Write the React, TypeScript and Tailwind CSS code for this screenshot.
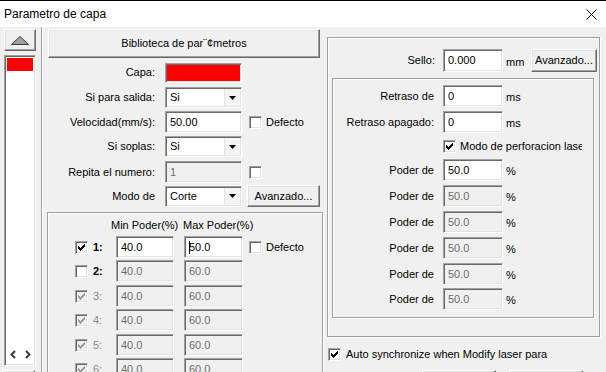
import type { ReactNode } from "react";

const sunken =
    "border border-t-[#a0a0a0] border-l-[#a0a0a0] border-r-white border-b-white shadow-[inset_1px_1px_0_#696969,inset_-1px_-1px_0_#e3e3e3]";
const raised =
    "border border-t-white border-l-white border-r-[#696969] border-b-[#696969] shadow-[inset_-1px_-1px_0_#a0a0a0,inset_1px_1px_0_#e3e3e3] bg-[#f0f0f0]";
const etched = "border border-[#a0a0a0] shadow-[1px_1px_0_#fff,inset_1px_1px_0_#fff]";

function Field({ value, className = "", disabled = false, caret = false }: { value: string; className?: string; disabled?: boolean; caret?: boolean }) {
    return (
        <div
            className={`${sunken} ${disabled ? "bg-[#f0f0f0] text-[#6d6d6d]" : "bg-white text-black"} h-[22px] shrink-0 flex items-center pl-[4px] ${className}`}
        >
            {caret && <span className="w-px h-[13px] bg-black -mr-px" />}
            {value}
        </div>
    );
}

function Check({ checked = false, disabled = false }: { checked?: boolean; disabled?: boolean }) {
    return (
        <div className={`${sunken} w-[13px] h-[13px] shrink-0 flex items-center justify-center ${disabled ? "bg-[#f0f0f0]" : "bg-white"}`}>
            {checked && (
                <svg width="7" height="7" viewBox="0 0 7 7" shapeRendering="crispEdges">
                    <path
                        d="M6 0h1v1h-1z M5 1h2v1h-2z M0 2h1v1h-1z M4 2h3v1h-3z M0 3h2v1h-2z M3 3h3v1h-3z M0 4h5v1h-5z M1 5h3v1h-3z M2 6h1v1h-1z"
                        fill={disabled ? "#a0a0a0" : "#000"}
                    />
                </svg>
            )}
        </div>
    );
}

function Select({ value }: { value: string }) {
    return (
        <div className={`${sunken} bg-white w-[77px] h-[21px] shrink-0 flex items-stretch`}>
            <span className="flex-1 flex items-center pl-[4px]">{value}</span>
            <div className="w-[16px] border-l border-[#e3e3e3] bg-[#f4f4f4] flex items-center justify-center mr-px my-px">
                <svg width="7" height="4" viewBox="0 0 7 4">
                    <path d="M0 0h7L3.5 4z" fill="#000" />
                </svg>
            </div>
        </div>
    );
}

function Button({ children, className = "" }: { children?: ReactNode; className?: string }) {
    return <div className={`${raised} flex items-center justify-center shrink-0 ${className}`}>{children}</div>;
}

function Row({ label, className = "", children }: { label: string; className?: string; children: ReactNode }) {
    return (
        <div className={`flex items-center shrink-0 ${className}`}>
            <span className="w-[107px] shrink-0 text-right">{label}</span>
            <div className="ml-[10px] flex items-center">{children}</div>
        </div>
    );
}

function RightRow({ label, value, unit, disabled = false, className = "" }: { label: string; value: string; unit: string; disabled?: boolean; className?: string }) {
    return (
        <div className={`flex items-center h-[22px] shrink-0 ${className}`}>
            <span className="w-[101px] shrink-0 text-right">{label}</span>
            <Field value={value} disabled={disabled} className="w-[60px] ml-[9px]" />
            <span className="ml-[3px] mt-[3px]">{unit}</span>
        </div>
    );
}

const powerRows = [
    { n: "1:", on: true, checked: true, min: "40.0", max: "50.0", mt: "mt-0" },
    { n: "2:", on: true, checked: false, min: "40.0", max: "60.0", mt: "mt-[2px]" },
    { n: "3:", on: false, checked: true, min: "40.0", max: "60.0", mt: "mt-[3px]" },
    { n: "4:", on: false, checked: true, min: "40.0", max: "60.0", mt: "mt-[2px]" },
    { n: "5:", on: false, checked: true, min: "40.0", max: "60.0", mt: "mt-[3px]" },
    { n: "6:", on: false, checked: true, min: "40.0", max: "60.0", mt: "mt-[2px]" },
];

export default function App() {
    return (
        <div className="w-[606px] h-[372px] overflow-hidden bg-[#f0f0f0] font-['Liberation_Sans',Arial,sans-serif] text-[11px] text-black flex flex-col">
            {/* Title bar */}
            <div className="h-[27px] shrink-0 bg-white border-t border-black flex items-center justify-between pl-[4px] pr-[9px]">
                <span className="text-[12px]">Parametro de capa</span>
                <svg width="11" height="11" viewBox="0 0 11 11">
                    <path d="M0.5 0.5L10.5 10.5M10.5 0.5L0.5 10.5" stroke="#000" strokeWidth="1" />
                </svg>
            </div>

            <div className="flex flex-1 min-h-0">
                {/* Layer list */}
                <div className="w-[41px] shrink-0 pl-[4px] pt-[2px] flex flex-col">
                    <Button className="w-[32px] h-[22px]">
                        <svg width="18" height="9" viewBox="0 0 18 9">
                            <path d="M9 0.5L17.5 8.5H0.5Z" fill="#a0a0a0" stroke="#3c3c3c" strokeWidth="1" />
                        </svg>
                    </Button>
                    <div className={`${sunken} bg-white w-[32px] h-[311px] mt-[4px] flex flex-col p-[2px] shrink-0`}>
                        <div className="h-[13px] bg-[#ff0000]" />
                        <div className="flex-1" />
                        <div className="h-[14px] flex items-center justify-center gap-[9px] mb-[2px]">
                            <svg width="6" height="9" viewBox="0 0 6 9">
                                <path d="M5 1L1.5 4.5L5 8" stroke="#3c3c3c" strokeWidth="2" fill="none" />
                            </svg>
                            <svg width="6" height="9" viewBox="0 0 6 9">
                                <path d="M1 1L4.5 4.5L1 8" stroke="#3c3c3c" strokeWidth="2" fill="none" />
                            </svg>
                        </div>
                    </div>
                    <Button className="w-[33px] h-[20px] mt-[4px] -ml-[2px]" />
                </div>
                <div className="w-[2px] shrink-0 border-l border-[#a0a0a0] bg-white" />

                {/* Layer settings */}
                <div className="w-[275px] shrink-0 ml-[5px] pt-[2px] flex flex-col">
                    <Button className="w-[272px] h-[29px]">Biblioteca de par¨¢metros</Button>

                    <Row label="Capa:" className="h-[21px] mt-[4px]">
                        <div className={`${sunken} w-[77px] h-[20px] bg-[#ff0000]`} />
                    </Row>
                    <Row label="Si para salida:" className="h-[21px] mt-[4px]">
                        <Select value="Si" />
                    </Row>
                    <Row label="Velocidad(mm/s):" className="h-[22px] mt-[3px]">
                        <Field value="50.00" className="w-[77px]" />
                        <div className="ml-[7px]">
                            <Check />
                        </div>
                        <span className="ml-[4px]">Defecto</span>
                    </Row>
                    <Row label="Si soplas:" className="h-[21px] mt-[3px]">
                        <Select value="Si" />
                    </Row>
                    <Row label="Repita el numero:" className="h-[22px] mt-[4px]">
                        <Field value="1" disabled className="w-[77px]" />
                        <div className="ml-[7px]">
                            <Check />
                        </div>
                    </Row>
                    <Row label="Modo de" className="h-[22px] mt-[2px]">
                        <Select value="Corte" />
                        <Button className="w-[73px] h-[22px] ml-[5px]">Avanzado...</Button>
                    </Row>

                    {/* Power group */}
                    <div className={`${etched} w-[276px] h-[180px] shrink-0 -ml-px mt-[5px] flex flex-col`}>
                        <div className="flex items-center h-[14px] shrink-0 mt-[5px] pl-[63px]">
                            <span className="w-[72px] shrink-0">Min Poder(%)</span>
                            <span>Max Poder(%)</span>
                        </div>
                        <div className="flex flex-col shrink-0 mt-[4px]">
                            {powerRows.map((r, i) => (
                                <div key={r.n} className={`flex items-center h-[22px] shrink-0 pl-[27px] ${r.mt}`}>
                                    <Check checked={r.checked} disabled={!r.on} />
                                    <span className={`ml-[5px] w-[23px] shrink-0 ${r.on ? "font-bold text-black" : "text-[#8a8a8a]"}`}>{r.n}</span>
                                    <Field value={r.min} disabled={!r.on || i > 0} className="w-[58px]" />
                                    <Field value={r.max} disabled={!r.on || i > 0} caret={i === 0} className="w-[59px] ml-[10px]" />
                                    {i === 0 && (
                                        <>
                                            <div className="ml-[6px]">
                                                <Check />
                                            </div>
                                            <span className="ml-[4px]">Defecto</span>
                                        </>
                                    )}
                                </div>
                            ))}
                        </div>
                    </div>
                </div>

                {/* Right panel */}
                <div className="w-[273px] shrink-0 ml-[4px] flex flex-col">
                    <div className={`${etched} h-[300px] shrink-0 mt-[10px] flex flex-col`}>
                        <div className="flex items-center h-[23px] shrink-0 mt-[11px]">
                            <span className="w-[107px] shrink-0 text-right">Sello:</span>
                            <Field value="0.000" className="w-[60px] h-[23px] ml-[8px]" />
                            <span className="ml-[3px] mt-[3px] w-[25px]">mm</span>
                            <Button className="w-[66px] h-[23px]">Avanzado...</Button>
                        </div>
                        <div className={`${etched} w-[262px] h-[240px] shrink-0 ml-[4px] mt-[6px] flex flex-col overflow-hidden`}>
                            <RightRow label="Retraso de" value="0" unit="ms" className="mt-[6px]" />
                            <RightRow label="Retraso apagado:" value="0" unit="ms" className="mt-[4px]" />
                            <div className="flex items-center h-[18px] shrink-0 mt-[4px] pl-[110px] whitespace-nowrap">
                                <Check checked />
                                <span className="ml-[4px] w-[122px] overflow-hidden">Modo de perforacion laser</span>
                            </div>
                            <div className="flex flex-col gap-[4px] mt-[4px]">
                                <RightRow label="Poder de" value="50.0" unit="%" />
                                <RightRow label="Poder de" value="50.0" unit="%" disabled />
                                <RightRow label="Poder de" value="50.0" unit="%" disabled />
                                <RightRow label="Poder de" value="50.0" unit="%" disabled />
                                <RightRow label="Poder de" value="50.0" unit="%" disabled />
                                <RightRow label="Poder de" value="50.0" unit="%" disabled className="-mt-px" />
                            </div>
                        </div>
                    </div>
                    <div className="flex items-center h-[13px] shrink-0 mt-[11px] ml-px">
                        <Check checked />
                        <span className="ml-[5px]">Auto synchronize when Modify laser para</span>
                    </div>
                    <div className="flex shrink-0 mt-[9px] ml-[95px] gap-[13px]">
                        <Button className="w-[74px] h-[23px]" />
                        <Button className="w-[74px] h-[23px]" />
                    </div>
                </div>
            </div>
        </div>
    );
}
